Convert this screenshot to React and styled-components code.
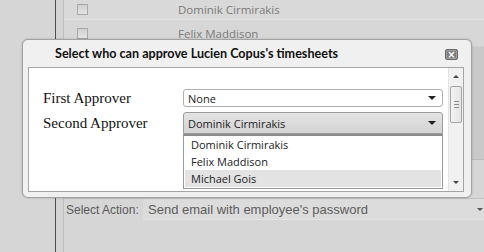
import React from "react";
import styled, { createGlobalStyle } from "styled-components";

const Global = createGlobalStyle`
  html, body { margin: 0; padding: 0; }
  body { width: 484px; height: 252px; overflow: hidden; background: #d5d5d5; }
  * { box-sizing: border-box; }
`;

const UI = `"Open Sans", "Noto Sans", sans-serif`;

const Page = styled.div`
  position: relative;
  width: 484px;
  height: 252px;
  display: flex;
  background: #d5d5d5;
  overflow: hidden;
`;

const Sidebar = styled.div`
  width: 56px;
  flex: none;
  border-right: 1px solid #4e4e4e;
  background: #d6d6d6;
`;

const Main = styled.div`
  flex: 1;
  display: flex;
  flex-direction: column;
  padding-left: 7px;
  background: #d3d3d3;
`;

const Content = styled.div`
  flex: 1;
  display: flex;
  flex-direction: column;
  border-left: 1px solid #bfbfbf;
  background: #d6d6d6;
`;

const ListRow = styled.div`
  height: ${(p) => p.$h}px;
  display: flex;
  align-items: center;
  padding-left: 13px;
  background: ${(p) => p.$bg};
  border-bottom: 1px solid ${(p) => p.$line};
  font-family: ${UI};
  font-size: 11.5px;
  color: #7a7a7a;
`;

const Check = styled.span`
  width: 11px;
  height: 11px;
  border: 1px solid #a9a9a9;
  background: linear-gradient(#d0d0d0, #e4e4e4);
  flex: none;
`;

const RowName = styled.span`
  margin-left: 90px;
`;

const Band = styled.div`
  height: 113px;
  background: #c9c9c9;
  border-bottom: 1px solid #bcbcbc;
`;

const Spacer = styled.div`
  height: 39px;
  background: #d6d6d6;
  border-bottom: 1px solid #c4c4c4;
`;

const ActionRow = styled.div`
  display: flex;
  align-items: center;
  height: 21px;
  padding-left: 2px;
`;

const ActionLabel = styled.span`
  font-family: "Liberation Sans", Arial, sans-serif;
  font-size: 12px;
  color: #5a5a5a;
  width: 77px;
  flex: none;
`;

const ActionSelect = styled.div`
  flex: 1;
  height: 21px;
  display: flex;
  align-items: center;
  justify-content: space-between;
  padding: 0 1px 0 5px;
  background: #dcdcdc;
  border-bottom: 1px solid #e4e4e4;
  font-family: "Liberation Sans", Arial, sans-serif;
  font-size: 13px;
  color: #5c5c5c;
  white-space: nowrap;
`;

const Arrow = styled.span`
  width: 0;
  height: 0;
  border-left: ${(p) => p.$s}px solid transparent;
  border-right: ${(p) => p.$s}px solid transparent;
  border-${(p) => (p.$up ? "bottom" : "top")}: ${(p) => p.$s}px solid ${(p) => p.$c || "#222"};
  flex: none;
`;

const Dialog = styled.div`
  position: absolute;
  left: 22px;
  top: 39px;
  width: 450px;
  height: 159px;
  display: flex;
  flex-direction: column;
  border: 1px solid #a3a3a3;
  border-radius: 6px;
  background: #f0f0f0;
  box-shadow: 0 0 2px rgba(0, 0, 0, 0.25);
  padding: 0 7px 5px 5px;
`;

const TitleBar = styled.div`
  height: 27px;
  flex: none;
  display: flex;
  align-items: center;
  justify-content: space-between;
  padding-left: 27px;
  padding-right: 6px;
  font-family: Lato, "Open Sans", sans-serif;
  font-weight: 700;
  font-size: 12.6px;
  color: #111;
`;

const Close = styled.span`
  width: 13px;
  height: 11px;
  border-radius: 2px;
  background: #7e7e7e;
  border: 1px solid #666;
  box-shadow: inset 0 0 0 1px #a0a0a0;
  color: #fff;
  font-family: "DejaVu Sans", sans-serif;
  font-size: 10px;
  line-height: 8px;
  display: flex;
  align-items: center;
  justify-content: center;
  margin-top: 2px;
`;

const Panel = styled.div`
  flex: 1;
  display: flex;
  background: #fff;
  border: 1px solid #a5a5a5;
`;

const Form = styled.div`
  flex: 1;
  display: grid;
  grid-template-columns: 140px 260px;
  grid-auto-rows: min-content;
  row-gap: 5px;
  align-items: center;
  padding: 21px 0 0 14px;
`;

const Label = styled.span`
  font-family: "Liberation Serif", "Times New Roman", serif;
  font-size: 15px;
  color: #111;
  line-height: 18px;
`;

const SelectWrap = styled.div`
  position: relative;
`;

const Select = styled.div`
  height: ${(p) => (p.$open ? 22 : 18)}px;
  display: flex;
  align-items: center;
  justify-content: space-between;
  padding: 0 6px 0 4px;
  border: 1px solid ${(p) => (p.$open ? "#9c9c9c" : "#b0b0b0")};
  border-radius: ${(p) => (p.$open ? "3px 3px 0 0" : "3px")};
  background: ${(p) => (p.$open ? "linear-gradient(#e4e4e4, #d3d3d3)" : "#fff")};
  font-family: ${UI};
  font-size: 11px;
  color: #222;
`;

const Menu = styled.div`
  position: absolute;
  left: 0;
  right: 0;
  top: 100%;
  height: 55px;
  border: 1px solid #9a9a9a;
  border-top: 2px solid #8a8a8a;
  background: #fff;
  padding: 0 1px 0;
`;

const MenuItem = styled.div`
  height: 17px;
  display: flex;
  align-items: center;
  padding-left: 6px;
  background: ${(p) => (p.$active ? "#e3e3e3" : "transparent")};
  font-family: ${UI};
  font-size: 11px;
  color: #222;
`;

const Scrollbar = styled.div`
  width: 15px;
  flex: none;
  display: flex;
  flex-direction: column;
  align-items: center;
  background: #f1f1f1;
  border-left: 1px solid #e4e4e4;
`;

const ScrollBtn = styled.div`
  height: 17px;
  width: 100%;
  flex: none;
  display: flex;
  align-items: center;
  justify-content: center;
`;

const Thumb = styled.div`
  width: 12px;
  height: 37px;
  margin-top: 1px;
  border: 1px solid #a4a4a4;
  border-radius: 2px;
  background: linear-gradient(90deg, #f4f4f4, #e2e2e2);
  display: flex;
  flex-direction: column;
  align-items: center;
  justify-content: center;
  gap: 2px;
`;

const Grip = styled.span`
  width: 5px;
  height: 1px;
  background: #8a8a8a;
`;

const Track = styled.div`
  flex: 1;
`;

export default function App() {
  return (
    <Page>
      <Global />
      <Sidebar />
      <Main>
        <Content>
          <ListRow $h={20} $bg="#d9d9d9" $line="#e2e2e2">
            <Check />
            <RowName>Dominik Cirmirakis</RowName>
          </ListRow>
          <ListRow $h={27} $bg="#d7d7d7" $line="#d0d0d0">
            <Check />
            <RowName>Felix Maddison</RowName>
          </ListRow>
          <Band />
          <Spacer />
          <ActionRow>
            <ActionLabel>Select Action:</ActionLabel>
            <ActionSelect>
              Send email with employee's password
              <Arrow $s={3} $c="#555" />
            </ActionSelect>
          </ActionRow>
        </Content>
      </Main>

      <Dialog>
        <TitleBar>
          Select who can approve Lucien Copus's timesheets
          <Close>×</Close>
        </TitleBar>
        <Panel>
          <Form>
            <Label>First Approver</Label>
            <Select>
              None
              <Arrow $s={4} />
            </Select>
            <Label>Second Approver</Label>
            <SelectWrap>
              <Select $open>
                Dominik Cirmirakis
                <Arrow $s={4} />
              </Select>
              <Menu>
                <MenuItem>Dominik Cirmirakis</MenuItem>
                <MenuItem>Felix Maddison</MenuItem>
                <MenuItem $active>Michael Gois</MenuItem>
              </Menu>
            </SelectWrap>
          </Form>
          <Scrollbar>
            <ScrollBtn>
              <Arrow $up $s={3} $c="#444" />
            </ScrollBtn>
            <Thumb>
              <Grip />
              <Grip />
              <Grip />
            </Thumb>
            <Track />
            <ScrollBtn>
              <Arrow $s={3} $c="#444" />
            </ScrollBtn>
          </Scrollbar>
        </Panel>
      </Dialog>
    </Page>
  );
}
